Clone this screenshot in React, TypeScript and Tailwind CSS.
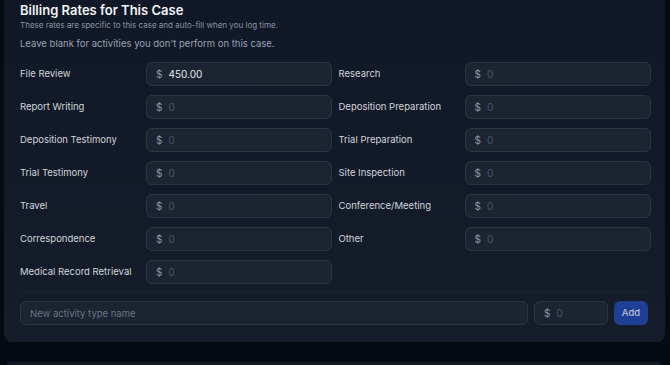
import { useState } from 'react';

// 활동별 기본 요율
const RATES: { name: string; value: string }[] = [
  { name: 'File Review', value: '450.00' },
  { name: 'Research', value: '' },
  { name: 'Report Writing', value: '' },
  { name: 'Deposition Preparation', value: '' },
  { name: 'Deposition Testimony', value: '' },
  { name: 'Trial Preparation', value: '' },
  { name: 'Trial Testimony', value: '' },
  { name: 'Site Inspection', value: '' },
  { name: 'Travel', value: '' },
  { name: 'Conference/Meeting', value: '' },
  { name: 'Correspondence', value: '' },
  { name: 'Other', value: '' },
  { name: 'Medical Record Retrieval', value: '' },
];

function MoneyInput({
  value,
  onChange,
  className = '',
}: {
  value: string;
  onChange: (v: string) => void;
  className?: string;
}) {
  return (
    <div
      className={`flex items-center h-6 rounded-md border border-[#2a3444] bg-[#1c2432] pl-[9px] pr-2 ${className}`}
    >
      <span className="text-[10px] text-[#8b94a3] mr-[6px]">$</span>
      <input
        type="text"
        value={value}
        onChange={(e) => onChange(e.target.value)}
        placeholder="0"
        className="flex-1 min-w-0 bg-transparent text-[10px] text-[#e5e7eb] placeholder:text-[#4b5565] outline-none"
      />
    </div>
  );
}

export default function App() {
  const [rates, setRates] = useState(RATES);
  const [newName, setNewName] = useState('');
  const [newRate, setNewRate] = useState('');

  const updateRate = (i: number, v: string) => {
    setRates((prev) => prev.map((r, idx) => (idx === i ? { ...r, value: v } : r)));
  };

  return (
    <div
      className="min-h-[365px] bg-[#060a13] overflow-hidden"
      style={{ fontFamily: 'Inter, "Noto Sans", sans-serif' }}
    >
      <div className="ml-[4px] mr-[5px] -mt-[12px] rounded-lg bg-gradient-to-b from-[#101726] to-[#151c2a] pl-4 pr-[17px] pt-[12px] pb-[17px]">
        {/* Header */}
        <h2 className="text-[13px] leading-[20px] font-semibold text-[#f3f4f6]">
          Billing Rates for This Case
        </h2>
        <p className="text-[8px] leading-[12px] text-[#8b94a3] -mt-[1px]">
          These rates are specific to this case and auto-fill when you log time.
        </p>
        <p className="text-[9.5px] leading-[14px] text-[#9aa3b1] mt-[6px]">
          Leave blank for activities you don't perform on this case.
        </p>

        {/* Rates grid */}
        <div className="grid grid-cols-2 gap-x-[9px] gap-y-[9px] mt-[11px]">
          {rates.map((r, i) => (
            <div key={r.name} className="flex items-center">
              <label className="w-[126px] shrink-0 text-[9.5px] text-[#d1d5db]">
                {r.name}
              </label>
              <MoneyInput
                value={r.value}
                onChange={(v) => updateRate(i, v)}
                className="flex-1"
              />
            </div>
          ))}
        </div>

        {/* Add new activity */}
        <div className="mt-[7px] border-t border-[#1a2230] pt-[9px] flex items-center gap-[6px]">
          <input
            type="text"
            value={newName}
            onChange={(e) => setNewName(e.target.value)}
            placeholder="New activity type name"
            className="flex-1 h-6 rounded-md border border-[#2a3444] bg-[#1c2432] px-[9px] text-[9.5px] text-[#e5e7eb] placeholder:text-[#6b7482] outline-none"
          />
          <MoneyInput value={newRate} onChange={setNewRate} className="w-[74px]" />
          <button className="h-6 w-[34px] rounded-md bg-[#1e3f93] text-[9.5px] font-medium text-[#b4c0dc]">
            Add
          </button>
        </div>
      </div>

      <div className="ml-[4px] mr-[5px] mt-[20px] h-10 rounded-lg border border-[#171f2d] bg-[#101726]" />
    </div>
  );
}
